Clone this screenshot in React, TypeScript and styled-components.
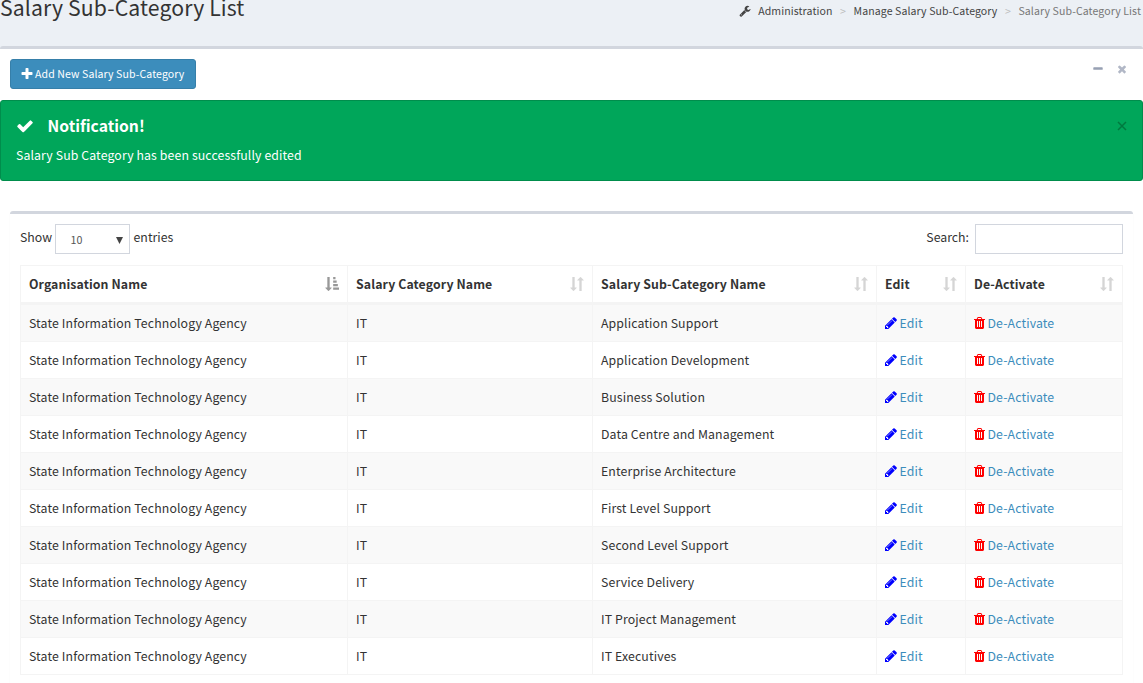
import React from "react";
import styled, { createGlobalStyle } from "styled-components";

const Global = createGlobalStyle`
  * { box-sizing: border-box; }
  body {
    margin: 0;
    background: #fff;
    color: #333;
    font-family: "Noto Sans CJK SC", sans-serif;
    font-size: 12.3px;
    line-height: 20px;
    overflow: hidden;
  }
`;

const Header = styled.header`
  height: 46px;
  background: #ecf0f5;
  display: flex;
  justify-content: space-between;
  align-items: flex-start;
`;
const Title = styled.h1`
  margin: -6px 0 0;
  font-size: 21.2px;
  letter-spacing: 0.13px;
  font-weight: 400;
  line-height: 26px;
  white-space: nowrap;
`;
const Crumbs = styled.nav`
  display: flex;
  align-items: center;
  height: 20px;
  margin: 1px 2px 0 0;
  font-size: 10.55px;
  letter-spacing: 0.1px;
  color: #444;
  white-space: nowrap;
`;
const Crumb = styled.span<{ $muted?: boolean }>`
  color: ${(p) => (p.$muted ? "#777" : "#444")};
`;
const Sep = styled.span`
  width: 21px;
  text-align: center;
  color: #bbb;
  font-size: 10.55px;
`;
const Glyph = styled.svg<{ $w: number; $h: number; $gap?: number }>`
  display: block;
  flex: none;
  width: ${(p) => p.$w}px;
  height: ${(p) => p.$h}px;
  margin-right: ${(p) => p.$gap ?? 0}px;
  fill: currentColor;
`;
const Panel = styled.section`
  border-top: 3px solid #d2d6de;
  border-radius: 3px 3px 0 0;
  background: #fff;
`;
const PanelWrap = styled.div`
  background: #ecf0f5;
`;
const PanelHead = styled.div`
  display: flex;
  justify-content: space-between;
  align-items: flex-start;
  padding: 10px 15px 11px 10px;
`;
const AddButton = styled.button`
  display: flex;
  align-items: center;
  width: 186px;
  height: 30px;
  padding: 0 0 0 9px;
  border: 1px solid #367fa9;
  border-radius: 3px;
  background: #3c8dbc;
  color: #fff;
  font: 400 10.55px/18px "Noto Sans CJK SC", sans-serif;
  letter-spacing: 0.1px;
  white-space: nowrap;
`;
const Tools = styled.div`
  display: flex;
  gap: 12px;
  padding-top: 4px;
  color: #97a0b3;
`;
const Faded = styled.span`
  opacity: 0.75;
`;
const Alert = styled.div`
  display: flex;
  justify-content: space-between;
  height: 81px;
  padding: 15px;
  border: 1px solid #008d4c;
  border-radius: 3px;
  background: #00a65a;
  color: #fff;
`;
const AlertTitle = styled.h4`
  display: flex;
  align-items: center;
  height: 20px;
  margin: 0 0 9px;
  font-size: 15.7px;
  font-weight: 700;
`;
const AlertText = styled.p`
  margin: 0;
  letter-spacing: 0.11px;
`;
const AlertClose = styled.button`
  align-self: flex-start;
  display: block;
  margin: 5px 0 0;
  padding: 0;
  border: 0;
  background: none;
  color: #00793f;
`;
const Inner = styled.section`
  margin: 30px 10px 0;
  border-top: 3px solid #d2d6de;
  border-radius: 3px;
  box-shadow: 0 1px 1px rgba(0, 0, 0, 0.1);
  padding: 10px 10px 20px;
`;
const Controls = styled.div`
  display: flex;
  justify-content: space-between;
  height: 41px;
`;
const Label = styled.label`
  display: flex;
  height: 30px;
  line-height: 26px;
`;
const Select = styled.span`
  display: flex;
  justify-content: space-between;
  align-items: center;
  width: 75px;
  height: 30px;
  margin: 0 3.5px 0 3px;
  padding: 2px 6px 0 14.5px;
  border: 1px solid #d2d6de;
  color: #555;
  font-size: 10.7px;
`;
const Input = styled.input`
  width: 148px;
  height: 30px;
  margin-left: 6px;
  border: 1px solid #d2d6de;
  background: #fff;
`;
const Table = styled.table`
  width: 1103px;
  table-layout: fixed;
  border-collapse: separate;
  border-spacing: 0;
  border-right: 1px solid #f4f4f4;
`;
const Th = styled.th`
  height: 40px;
  padding: 0 8px;
  border: solid #f4f4f4;
  border-width: 1px 0 3px 1px;
  text-align: left;
  font-weight: 700;
  letter-spacing: 0.11px;
`;
const HeadCell = styled.div`
  display: flex;
  justify-content: space-between;
  align-items: center;
  white-space: nowrap;
`;
const SortMark = styled.span<{ $active?: boolean }>`
  color: #333;
  opacity: ${(p) => (p.$active ? 0.5 : 0.2)};
`;
const Tr = styled.tr`
  &:nth-child(odd) { background: #f9f9f9; }
`;
const Td = styled.td`
  height: 37px;
  padding: 0 0 0 8px;
  border: solid #f4f4f4;
  border-width: 0 0 1px 1px;
  white-space: nowrap;
  letter-spacing: 0.12px;
`;
const Action = styled.a`
  display: flex;
  align-items: center;
  margin-left: -0.5px;
  color: #3c8dbc;
`;
const IconTone = styled.span<{ $tone: string }>`
  color: ${(p) => p.$tone};
`;

const FA = {
  plus: "M1600 736v192q0 40-28 68t-68 28h-416v416q0 40-28 68t-68 28h-192q-40 0-68-28t-28-68v-416h-416q-40 0-68-28t-28-68v-192q0-40 28-68t68-28h416v-416q0-40 28-68t68-28h192q40 0 68 28t28 68v416h416q40 0 68 28t28 68z",
  check: "M1671 566q0 40-28 68l-724 724-136 136q-28 28-68 28t-68-28l-136-136-362-362q-28-28-28-68t28-68l136-136q28-28 68-28t68 28l294 295 656-657q28-28 68-28t68 28l136 136q28 28 28 68z",
  times: "M1490 1322q0 40-28 68l-136 136q-28 28-68 28t-68-28l-294-294-294 294q-28 28-68 28t-68-28l-136-136q-28-28-28-68t28-68l294-294-294-294q-28-28-28-68t28-68l136-136q28-28 68-28t68 28l294 294 294-294q28-28 68-28t68 28l136 136q28 28 28 68t-28 68l-294 294 294 294q28 28 28 68z",
  minus: "M1600 736v192q0 40-28 68t-68 28h-1216q-40 0-68-28t-28-68v-192q0-40 28-68t68-28h1216q40 0 68 28t28 68z",
  wrench: "M448 1472q0-26-19-45t-45-19-45 19-19 45 19 45 45 19 45-19 19-45zm644-420l-682 682q-37 37-90 37-52 0-91-37l-106-108q-38-36-38-90 0-53 38-91l681-681q39 98 114.5 173.5t173.5 114.5zm634-435q0 39-23 106-47 134-164.5 217.5t-258.5 83.5q-185 0-316.5-131.5t-131.5-316.5 131.5-316.5 316.5-131.5q58 0 121.5 16.5t107.5 46.5q16 11 16 28t-16 28l-293 169v224l193 107q5-3 79-48.5t135.5-81 70.5-35.5q15 0 23.5 10t8.5 25z",
  pencil: "M491 1536l91-91-235-235-91 91v107h128v128h107zm523-928q0-22-22-22-10 0-17 7l-542 542q-7 7-7 17 0 22 22 22 10 0 17-7l542-542q7-7 7-17zm-54-192l416 416-832 832h-416v-416zm683 96q0 53-37 90l-166 166-416-416 166-165q36-38 90-38 53 0 91 38l235 234q37 39 37 91z",
  trash: "M704 1376v-704q0-14-9-23t-23-9h-64q-14 0-23 9t-9 23v704q0 14 9 23t23 9h64q14 0 23-9t9-23zm256 0v-704q0-14-9-23t-23-9h-64q-14 0-23 9t-9 23v704q0 14 9 23t23 9h64q14 0 23-9t9-23zm256 0v-704q0-14-9-23t-23-9h-64q-14 0-23 9t-9 23v704q0 14 9 23t23 9h64q14 0 23-9t9-23zm-544-992h448l-48-117q-7-9-17-11h-317q-10 2-17 11zm928 32v64q0 14-9 23t-23 9h-96v948q0 83-47 143.5t-113 60.5h-832q-66 0-113-58.5t-47-141.5v-952h-96q-14 0-23-9t-9-23v-64q0-14 9-23t23-9h309l70-167q15-37 54-63t79-26h320q40 0 79 26t54 63l70 167h309q14 0 23 9t9 23z",
};
const DOWN = "M400 300h150q21 0 25 -11t-10 -25l-230 -250q-14 -15 -35 -15t-35 15l-230 250q-14 14 -10 25t25 11h150v900h200v-900z";
const GL = {
  sort: DOWN + "M935 1184l230 -249q14 -14 10 -24.5t-25 -10.5h-150v-900h-200v900h-150q-21 0 -25 10.5t10 24.5l230 249q14 15 35 15t35 -15z",
  sortAsc: DOWN + "M900 1000h-200v200h200v-200zM1000 700h-300v200h300v-200zM1100 400h-400v200h400v-200zM1200 100h-500v200h500v-200z",
};

const Fa = ({ d, size, gap }: { d: string; size: number; gap?: number }) => (
  <Glyph viewBox="0 0 1792 1792" $w={size} $h={size} $gap={gap}><path d={d} /></Glyph>
);
const Gl = ({ d }: { d: string }) => (
  <Glyph viewBox="0 0 1200 1200" $w={14} $h={14}>
    <path transform="translate(0 1200) scale(1 -1)" d={d} />
  </Glyph>
);

const columns: [string, number][] = [
  ["Organisation Name", 327],
  ["Salary Category Name", 245],
  ["Salary Sub-Category Name", 284],
  ["Edit", 89],
  ["De-Activate", 157],
];
const names = [
  "Application Support", "Application Development", "Business Solution",
  "Data Centre and Management", "Enterprise Architecture", "First Level Support",
  "Second Level Support", "Service Delivery", "IT Project Management", "IT Executives",
];

export default function App() {
  return (
    <>
      <Global />
      <Header>
        <Title>Salary Sub-Category List</Title>
        <Crumbs>
          <Fa d={FA.wrench} size={12} gap={7} />
          <Crumb>Administration</Crumb>
          <Sep>&gt;</Sep>
          <Crumb>Manage Salary Sub-Category</Crumb>
          <Sep>&gt;</Sep>
          <Crumb $muted>Salary Sub-Category List</Crumb>
        </Crumbs>
      </Header>
      <PanelWrap>
        <Panel>
          <PanelHead>
            <AddButton><Fa d={FA.plus} size={14} gap={1} />Add New Salary Sub-Category</AddButton>
            <Tools>
              <Fa d={FA.minus} size={12} />
              <Faded><Fa d={FA.times} size={12} /></Faded>
            </Tools>
          </PanelHead>
          <Alert>
            <div>
              <AlertTitle><Fa d={FA.check} size={18} gap={13.5} />Notification!</AlertTitle>
              <AlertText>Salary Sub Category has been successfully edited</AlertText>
            </div>
            <AlertClose>
              <svg width="10" height="10" viewBox="0 0 10 10" display="block">
                <path d="M1 1l8 8M9 1l-8 8" stroke="currentColor" strokeWidth="1.5" />
              </svg>
            </AlertClose>
          </Alert>
          <Inner>
            <Controls>
              <Label>
                Show
                <Select>
                  10
                  <svg width="7" height="7" viewBox="0 0 7 7"><path d="M0 0h7L3.5 7z" fill="#444" /></svg>
                </Select>
                entries
              </Label>
              <Label>Search:<Input /></Label>
            </Controls>
            <Table>
              <colgroup>{columns.map(([c, w]) => <col key={c} width={w} />)}</colgroup>
              <thead>
                <tr>
                  {columns.map(([c], i) => (
                    <Th key={c}>
                      <HeadCell>
                        {c}
                        <SortMark $active={i === 0}><Gl d={i === 0 ? GL.sortAsc : GL.sort} /></SortMark>
                      </HeadCell>
                    </Th>
                  ))}
                </tr>
              </thead>
              <tbody>
                {names.map((n) => (
                  <Tr key={n}>
                    <Td>State Information Technology Agency</Td>
                    <Td>IT</Td>
                    <Td>{n}</Td>
                    <Td>
                      <Action>
                        <IconTone $tone="#00f">
                          <Glyph viewBox="128 0 1536 1792" $w={12} $h={14} $gap={3}><path d={FA.pencil} /></Glyph>
                        </IconTone>
                        Edit
                      </Action>
                    </Td>
                    <Td>
                      <Action>
                        <IconTone $tone="#f00">
                          <Glyph viewBox="192 0 1408 1792" $w={11} $h={14} $gap={3}><path d={FA.trash} /></Glyph>
                        </IconTone>
                        De-Activate
                      </Action>
                    </Td>
                  </Tr>
                ))}
              </tbody>
            </Table>
          </Inner>
        </Panel>
      </PanelWrap>
    </>
  );
}
